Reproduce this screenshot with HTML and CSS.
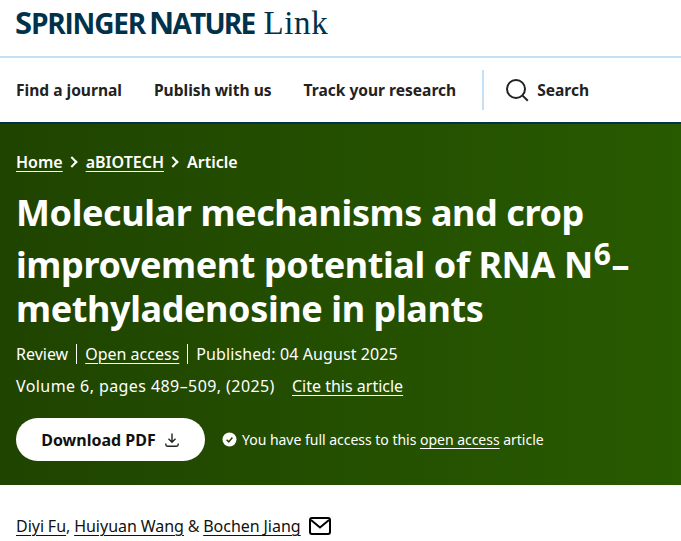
FILE: index.html
```html
<!DOCTYPE html>
<html lang="en">
<head>
    <meta charset="UTF-8">
    <meta name="viewport" content="width=device-width, initial-scale=1.0">
    <title>Molecular mechanisms and crop improvement potential of RNA N6-methyladenosine in plants</title>
    <link rel="stylesheet" href="styles.css">
</head>
<body>
    <header class="logo-bar">
        <span class="logo-main"><span class="logo-word">Springer</span> <span class="logo-word">Nature</span></span>
        <span class="logo-link">Link</span>
    </header>
    <nav class="main-nav">
        <a href="#">Find a journal</a>
        <a href="#">Publish with us</a>
        <a href="#">Track your research</a>
        <span class="nav-divider"></span>
        <a href="#" class="nav-search">
            <svg width="23" height="23" viewBox="0 0 23 23" fill="none" stroke="#222" stroke-width="2">
                <circle cx="10" cy="10" r="9"/>
                <path d="M16.6 16.6 L21.8 21.8"/>
            </svg>
            Search
        </a>
    </nav>
    <section class="hero">
        <ol class="crumbs">
            <li><a href="#">Home</a></li>
            <li class="crumb-sep"></li>
            <li><a href="#">aBIOTECH</a></li>
            <li class="crumb-sep"></li>
            <li>Article</li>
        </ol>
        <h1>Molecular mechanisms and crop improvement potential of RNA N<sup>6</sup>–methyladenosine in plants</h1>
        <ul class="meta">
            <li>Review</li>
            <li><a href="#">Open access</a></li>
            <li class="meta-date">Published: 04 August 2025</li>
        </ul>
        <p class="volume"><span class="volume-text">Volume 6, pages 489–509, (2025)</span> <a href="#">Cite this article</a></p>
        <div class="actions">
            <a href="#" class="pdf-btn">
                Download PDF
                <svg width="16" height="16" viewBox="0 0 16 16" fill="none" stroke="#222" stroke-width="1.4">
                    <path d="M8 1.5 V10 M4.5 6.8 L8 10.3 L11.5 6.8"/>
                    <path d="M1.8 11.5 V12.5 Q1.8 14.2 3.5 14.2 H12.5 Q14.2 14.2 14.2 12.5 V11.5"/>
                </svg>
            </a>
            <p class="access">
                <svg width="15" height="15" viewBox="0 0 15 15">
                    <circle cx="7.5" cy="7.5" r="7" fill="#fff"/>
                    <path d="M4.6 7.8 L6.7 9.9 L10.4 5.4" fill="none" stroke="#1f4400" stroke-width="1.5"/>
                </svg>
                <span>You have full access to this <a href="#">open access</a> article</span>
            </p>
        </div>
    </section>
    <div class="authors">
        <p><a href="#">Diyi Fu</a>, <a href="#">Huiyuan Wang</a> &amp; <a href="#">Bochen Jiang</a></p>
        <svg width="22" height="18" viewBox="0 0 22 18" fill="none" stroke="#000" stroke-width="2">
            <rect x="1" y="1" width="20" height="16" rx="2"/>
            <path d="M2 3 L11 10.5 L20 3"/>
        </svg>
    </div>
</body>
</html>
```

FILE: styles.css
```css
body {
    margin: 0;
    font-family: "Noto Sans", Arial, sans-serif;
    color: #222;
    background-color: #fff;
    overflow: hidden;
}

.logo-bar {
    height: 56px;
    padding-left: 15px;
    display: flex;
    align-items: baseline;
    gap: 9px;
    line-height: 44px;
    border-bottom: 2px solid #c5e0f4;
}

.logo-main {
    font-family: "Open Sans", sans-serif;
    font-weight: 700;
    font-size: 28px;
    text-transform: uppercase;
    letter-spacing: -1.2px;
    word-spacing: -2px;
    color: #01324b;
}

.logo-word {
    display: inline-block;
}

.logo-word + .logo-word {
    letter-spacing: -1.8px;
}

.logo-word::first-letter {
    font-size: 31px;
}

.logo-link {
    font-family: "Liberation Serif", serif;
    font-size: 33px;
    letter-spacing: 0.7px;
    color: #01324b;
}

.main-nav {
    height: 64px;
    padding-left: 16px;
    display: flex;
    align-items: center;
    gap: 32px;
    font-size: 15.55px;
    font-weight: 700;
    border-bottom: 2px solid #01324b;
}

.main-nav a {
    color: #222;
    text-decoration: none;
}

.nav-divider {
    width: 2px;
    height: 40px;
    margin: 0 -10px 0 -6px;
    background-color: #c5e0f4;
}

.nav-search {
    display: flex;
    align-items: center;
    gap: 8px;
}

.hero {
    height: 361px;
    box-sizing: border-box;
    padding: 27px 16px 0;
    color: #fff;
    background: linear-gradient(90deg, #1f4400, #285a00);
}

.hero a {
    color: #fff;
    text-underline-offset: 3px;
    text-decoration-thickness: 1px;
}

.crumbs {
    list-style: none;
    margin: 0;
    padding: 0;
    display: flex;
    align-items: center;
    gap: 8px;
    height: 22px;
    font-size: 16px;
    font-weight: 600;
}

.crumb-sep {
    width: 6px;
    height: 6px;
    margin-left: -3px;
    margin-right: 2px;
    border-top: 2px solid #fff;
    border-right: 2px solid #fff;
    transform: rotate(45deg);
}

h1 {
    margin: 18px 0 0;
    font-size: 36px;
    line-height: 44px;
    font-weight: 700;
    letter-spacing: -0.4px;
}

h1 sup {
    font-size: 30px;
    line-height: 37px;
    vertical-align: 13px;
    margin: 0 1px 0 1px;
}

.meta {
    list-style: none;
    margin: 13px 0 0;
    padding: 0;
    display: flex;
    font-size: 16px;
    line-height: 20px;
}

.meta li + li {
    margin-left: 8px;
    padding-left: 8px;
    border-left: 1px solid #fff;
}

.meta .meta-date {
    letter-spacing: 0.1px;
}

.volume {
    margin: 12px 0 0;
    font-size: 16px;
    line-height: 20px;
}

.volume-text {
    letter-spacing: 0.42px;
}

.volume a {
    margin-left: 13px;
}

.actions {
    margin-top: 22px;
    display: flex;
    align-items: center;
    gap: 17px;
}

.pdf-btn {
    width: 189px;
    height: 43px;
    box-sizing: border-box;
    display: flex;
    align-items: center;
    justify-content: center;
    gap: 8px;
    border-radius: 22px;
    background-color: #fff;
    font-size: 16px;
    font-weight: 700;
    text-decoration: none;
}

.hero .pdf-btn {
    color: #111;
}

.access {
    margin: 0;
    display: flex;
    align-items: center;
    gap: 5px;
    font-size: 14px;
    letter-spacing: -0.02px;
}

.authors {
    margin-top: 30px;
    padding-left: 16px;
    display: flex;
    align-items: center;
    gap: 8px;
}

.authors p {
    margin: 0;
    font-size: 16px;
    line-height: 22px;
    word-spacing: -0.4px;
}

.authors a {
    color: #111;
    text-underline-offset: 3px;
    text-decoration-thickness: 1px;
}
```
